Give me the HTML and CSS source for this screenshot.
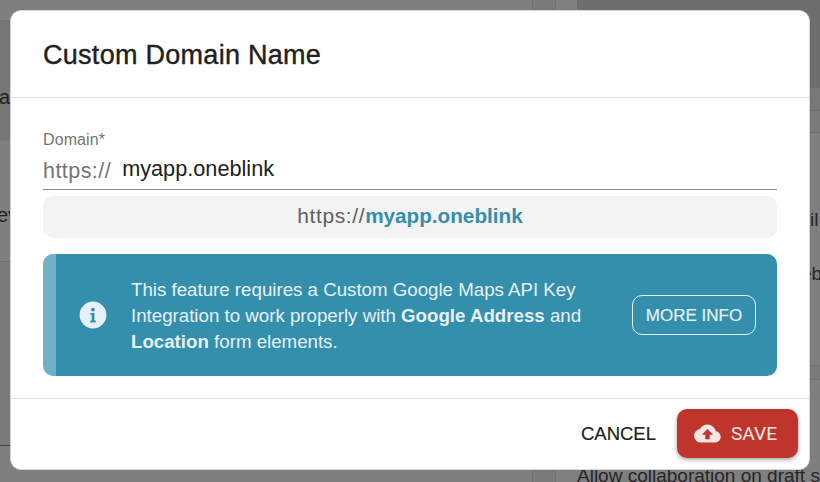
FILE: index.html
```html
<!DOCTYPE html>
<html lang="en">
<head>
<meta charset="utf-8">
<title>Custom Domain Name</title>
<link rel="stylesheet" href="styles.css">
</head>
<body>
<div class="page">
  <div class="page-main">
    <div class="row row-a"></div>
    <div class="row row-b"><span>ea</span></div>
    <div class="row row-c"><span>ev</span></div>
    <div class="row row-d"></div>
  </div>
  <div class="page-rail"></div>
  <div class="page-rail2"></div>
  <div class="page-side">
    <div class="side-head"></div>
    <div class="side-row side-r1"></div>
    <div class="side-row side-r2"></div>
    <div class="side-text side-t1">il</div>
    <div class="side-text side-t2">eb</div>
    <div class="side-band"></div>
    <div class="side-text side-t3">Allow collaboration on draft s</div>
  </div>
</div>
<div class="modal">
  <header class="modal-head"><h2>Custom Domain Name</h2></header>
  <section class="modal-body">
    <label class="field-label">Domain*</label>
    <div class="field">
      <span class="prefix">https://</span>
      <span class="value">myapp.oneblink</span>
    </div>
    <div class="preview"><span class="preview-scheme">https://</span><b>myapp.oneblink</b></div>
    <div class="notice">
      <div class="notice-icon">
        <svg viewBox="0 0 28 28" width="28" height="28">
          <circle cx="14" cy="14" r="13.4" fill="#e6f0f5"/>
          <circle cx="14" cy="8.6" r="1.9" fill="#348fac"/>
          <path d="M11.3 12h4.1v7.6h1.4v1.8h-5.5v-1.8h1.4v-5.8h-1.4z" fill="#348fac"/>
        </svg>
      </div>
      <p class="notice-text">This feature requires a Custom Google Maps API Key Integration to work properly with <b>Google Address</b> and <b>Location</b> form elements.</p>
      <button class="more">MORE INFO</button>
    </div>
  </section>
  <footer class="modal-foot">
    <button class="cancel">CANCEL</button>
    <button class="save">
      <svg viewBox="0 0 24 24" width="27" height="27"><path d="M19.35 10.04A7.49 7.49 0 0 0 12 4a7.5 7.5 0 0 0-6.65 4.04A6 6 0 0 0 6 20h13a5 5 0 0 0 .35-9.96zM14 13v4h-4v-4H7l5-5 5 5h-3z" fill="#f8e6e4"/></svg>
      <span>SAVE</span>
    </button>
  </footer>
</div>
</body>
</html>
```
FILE: styles.css
```css
* { box-sizing: border-box; }
html, body { margin: 0; height: 100%; }
body {
  width: 820px; height: 482px; overflow: hidden; position: relative;
  background: #7f7f7f;
  font-family: "Liberation Sans", Arial, sans-serif;
  color: #212121;
}
.page { display: grid; grid-template-columns: 532px 24px 21px 243px; height: 482px; overflow: hidden; }
.page-main { display: flex; flex-direction: column; font-size: 20px; line-height: 22px; color: #1f1f1f; }
.row { border-bottom: 1px solid #6c6c6c; }
.row-a { height: 21px; border-bottom-color: #737373; }
.row-b { height: 120px; padding-top: 65px; background: #767676; border-bottom-color: #7a7a7a; }
.row-c { height: 121px; padding-top: 63px; }
.row-d { height: 184px; background: #7b7b7b; border-bottom-color: #444; }
.row span { display: block; white-space: nowrap; }
.row-b span { margin-left: -12px; }
.row-c span { margin-left: -3px; }
.page-rail { background: #7b7b7b; border-left: 1px solid #707070; border-right: 1px solid #707070; }
.page-rail2 { background: #808080; }
.page-side { font-size: 19px; line-height: 22px; color: #262626; }
.side-head { height: 88px; background: #6e6e6e; }
.side-row { height: 23px; background: #787878; border-bottom: 1px solid #6c6c6c; }
.side-r2 { height: 22px; background: #7a7a7a; }
.side-text { white-space: nowrap; }
.side-t1 { margin-top: 76px; margin-left: 233px; }
.side-t2 { margin-top: 32px; margin-left: 224px; }
.side-band { margin-top: 80px; height: 15px; background: #7a7a7a; border-top: 1px solid #727272; border-bottom: 1px solid #727272; }
.side-t3 { margin-top: 85px; }
.modal {
  position: absolute; left: 10px; top: 10px; width: 800px; height: 460px;
  background: #fff; border-radius: 11px; border: 1px solid #d4d4d4;
  display: flex; flex-direction: column;
}
.modal-head { height: 87px; border-bottom: 1px solid #e0e0e0; padding: 2px 32px 0; display: flex; align-items: center; }
.modal-head h2 { margin: 0; font-size: 27px; letter-spacing: .28px; font-weight: 400; -webkit-text-stroke: 0.4px #212121; color: #212121; }
.modal-body { flex: 1; padding: 33px 32px 0; display: flex; flex-direction: column; }
.field-label { font-size: 16px; letter-spacing: .1px; line-height: 18px; color: #757575; }
.field { display: flex; align-items: baseline; height: 41px; padding-top: 5px; border-bottom: 1px solid #8c8c8c; gap: 11px; }
.prefix { font-size: 21.5px; letter-spacing: .45px; line-height: 30px; color: #757575; position: relative; top: 2px; }
.value { font-size: 21.7px; line-height: 30px; color: #212121; }
.preview { margin-top: 6px; height: 42px; padding-bottom: 2px; border-radius: 10px; background: #f3f3f3; display: flex; align-items: center; justify-content: center; font-size: 21px; color: #5f5f5f; }
.preview-scheme { letter-spacing: .6px; }
.preview b { color: #348fac; font-size: 20.7px; }
.notice { margin-top: 16px; height: 122px; border-radius: 10px; background: #348fac; border-left: 13px solid #70b0c5; display: flex; align-items: center; color: #e6f0f5; }
.notice-icon { width: 28px; margin-left: 23px; display: flex; }
.notice-text { margin: 2px 0 0 24px; width: 478px; font-size: 18.7px; line-height: 26px; }
.more { margin-left: 23px; width: 124px; height: 40px; border: 1px solid #e6f0f5; border-radius: 10px; background: none; color: #e6f0f5; font: 400 17px "Liberation Sans", Arial, sans-serif; padding: 1px 0 0; -webkit-text-stroke: 0.2px #e6f0f5; }
.modal-foot { height: 71px; border-top: 1px solid #e0e0e0; display: flex; align-items: center; justify-content: flex-end; padding: 0 11px 2px 0; gap: 21px; }
.cancel { background: none; border: 0; padding: 2px 0 0; font: 400 18.5px "Liberation Sans", Arial, sans-serif; color: #212121; -webkit-text-stroke: 0.2px #212121; }
.save { width: 121px; height: 49px; border: 0; border-radius: 10px; background: #c0352b; color: #f8e6e4; display: flex; align-items: center; justify-content: center; gap: 10px; font: 400 19.2px Roboto, sans-serif; box-shadow: 0 2px 4px rgba(0,0,0,.35); padding: 0 4px 0 0; }
```
